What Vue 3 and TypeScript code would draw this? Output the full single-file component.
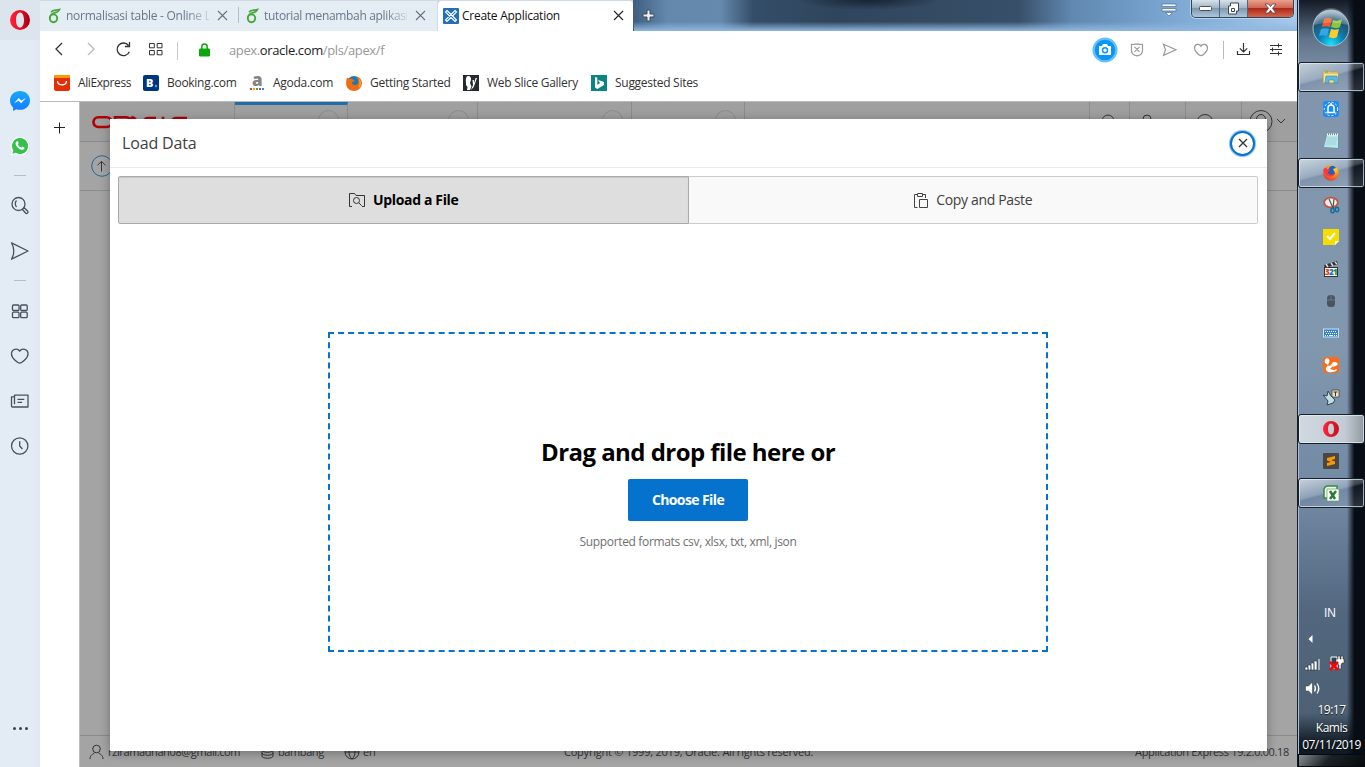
<script setup lang="ts">
interface Bookmark { id: string; label: string; width: number }

const bookmarks: Bookmark[] = [
  { id: 'ali', label: 'AliExpress', width: 89 },
  { id: 'booking', label: 'Booking.com', width: 106 },
  { id: 'agoda', label: 'Agoda.com', width: 97 },
  { id: 'firefox', label: 'Getting Started', width: 117 },
  { id: 'slice', label: 'Web Slice Gallery', width: 128 },
  { id: 'bing', label: 'Suggested Sites', width: 120 },
]

const sideIcons: string[] = ['messenger', 'whatsapp', 'line', 'search', 'send', 'line', 'grid', 'heart', 'news', 'clock']

const tasks: { id: string; state: string }[] = [
  { id: 'folder', state: 'open' },
  { id: 'share', state: '' },
  { id: 'notepad', state: '' },
  { id: 'fox', state: 'open' },
  { id: 'snip', state: '' },
  { id: 'sticky', state: '' },
  { id: 'clapper', state: '' },
  { id: 'mouse', state: '' },
  { id: 'keyboard', state: '' },
  { id: 'uc', state: '' },
  { id: 'bird', state: '' },
  { id: 'opera', state: 'focused' },
  { id: 'sublime', state: '' },
  { id: 'excel', state: 'open' },
]

const menuWidths: number[] = [113, 130, 154, 113]
</script>

<template>
  <div class="screen">
    <svg class="defs" width="0" height="0">
      <defs>
        <linearGradient id="operaRed" x1="0" x2="1"><stop offset="0" stop-color="#ff2438" /><stop offset=".55" stop-color="#e80d25" /><stop offset="1" stop-color="#98000e" /></linearGradient>
        <linearGradient id="operaTask" x1="0" x2="1"><stop offset="0" stop-color="#ff2438" /><stop offset="1" stop-color="#c80f20" /></linearGradient>
        <linearGradient id="msgBlue" x1="0" y1="0" x2="0" y2="1"><stop offset="0" stop-color="#16a9ff" /><stop offset="1" stop-color="#147cff" /></linearGradient>
        <radialGradient id="orb" cx=".5" cy=".95" r=".9"><stop offset="0" stop-color="#18e0ff" /><stop offset=".4" stop-color="#087fb4" /><stop offset=".75" stop-color="#23526f" /><stop offset="1" stop-color="#9ab5c6" /></radialGradient>
        <radialGradient id="foxFire" cx=".7" cy=".2" r=".9"><stop offset="0" stop-color="#ffe035" /><stop offset=".5" stop-color="#ff8a16" /><stop offset="1" stop-color="#e42a3d" /></radialGradient>
      </defs>
    </svg>

    <aside class="sidebar">
      <div class="opera-menu">
        <svg width="20" height="20" viewBox="0 0 20 20"><path fill="url(#operaRed)" fill-rule="evenodd" d="M10 0a10 10 0 1 0 0 20 10 10 0 0 0 0-20Zm0 2.400c2.600 0 4 3.500 4 7.600s-1.400 7.600-4 7.600S6 14.100 6 10s1.400-7.600 4-7.600Z" /></svg>
      </div>
      <div class="side-list">
        <div v-for="(icon, i) in sideIcons" :key="i" :class="icon === 'line' ? 'side-sep' : 'side-cell'">
          <svg v-if="icon === 'messenger'" width="22" height="22" viewBox="0 0 22 22"><path fill="url(#msgBlue)" d="M11 1C5.300 1 1 5.100 1 10.500c0 2.900 1.200 5.300 3.100 7V21l3.200-1.700c1.100.4 2.400.5 3.700.5 5.700 0 10-4 10-9.400S16.700 1 11 1Z" /><path fill="#fff" d="m5 13.200 4.800-5.100 2.500 2.500L17 8l-4.900 5.200-2.500-2.500Z" /></svg>
          <svg v-else-if="icon === 'whatsapp'" width="20" height="20" viewBox="0 0 20 20"><path fill="#fff" d="M10 .7A9.300 9.300 0 0 0 2 14.800L.6 19.500l4.900-1.300A9.300 9.300 0 1 0 10 .7Z" /><path fill="#35c24c" d="M10 2a8 8 0 0 0-6.700 12.400l-.9 3.300 3.400-.9A8 8 0 1 0 10 2Z" /><path fill="#fff" d="M6.900 5.300c.4-.3.900-.2 1.100.3l.6 1.500c.2.5-.7 1-.6 1.400.5 1.300 1.700 2.500 3.100 3 .4.200 1-1 1.500-.7l1.500.8c.5.300.4.900 0 1.400-.9 1-2.200 1-3.500.4-2.500-1-4.500-3.100-5-5.400-.2-1.100.3-2.100 1.300-2.700Z" /></svg>
          <svg v-else-if="icon !== 'line'" class="ink" width="20" height="20" viewBox="0 0 20 20">
            <template v-if="icon === 'search'"><circle cx="8.500" cy="8" r="6.500" /><path d="M6.500 4.500Q4 7.500 6.500 11" /><path d="m12.500 13.500 1.700-1.700 3.600 3.500c.8 1.200-.8 2.800-2 2Z" /></template>
            <path v-else-if="icon === 'send'" d="m1.500 1.800 16.500 8.200-16.500 8.200Q6 10 1.500 1.800Z" />
            <template v-else-if="icon === 'grid'"><rect x="2.500" y="4" width="6.500" height="5.500" rx="1" /><rect x="10.700" y="4" width="6.500" height="5.500" rx="1" /><rect x="2.500" y="11.200" width="6.500" height="5.500" rx="1" /><rect x="10.700" y="11.200" width="6.500" height="5.500" rx="1" /></template>
            <path v-else-if="icon === 'heart'" d="M9.700 5.200C7.600 1.700 1.500 2.900 1.500 8c0 4.600 6.700 9.200 8.200 9.200S18 12.600 18 8c0-5.100-6.200-6.300-8.300-2.800Z" />
            <template v-else-if="icon === 'news'"><path d="M4.500 13.200V4.100H18V16H2.500c-.7 0-1-.3-1-1V5.900h3M7.500 8.300h6.800M7.500 11.400h4.600" /></template>
            <template v-else><circle cx="9.700" cy="10" r="8.200" /><path d="M9.700 5.200V10l2.700 3" /></template>
          </svg>
        </div>
      </div>
      <div class="dots"><i></i><i></i><i></i></div>
    </aside>

    <main class="browser">
      <header class="tabstrip">
        <div v-for="n in 2" :key="n" class="tab" :class="'tab-' + n">
          <svg width="14" height="16" viewBox="0 0 14 16" fill="none" stroke="#45a73a"><ellipse cx="5.500" cy="10.300" rx="3.700" ry="3.900" stroke-width="1.900" /><path stroke-width="1.700" d="M2 9.500C2 6 4.500 5 8.500 4.500M3 4.200C5 1.700 7 2.600 11.500 1.500 10.500 4 8.500 4.700 5.500 5" /></svg>
          <span class="tab-title">{{ n === 1 ? 'normalisasi table - Online L' : 'tutorial menambah aplikasi' }}</span>
          <svg class="x" width="11" height="11" viewBox="0 0 11 11"><path d="m1 1 9 9M10 1l-9 9" /></svg>
        </div>
        <div class="tab current">
          <svg width="16" height="16" viewBox="0 0 16 16"><rect width="16" height="16" rx="1" fill="#2370b8" /><g fill="none" stroke="#fff" stroke-width="1.100"><path d="M4 2.500 13.500 12 12 13.500 2.500 4ZM12 2.500 13.500 4 4 13.500 2.500 12Z" /></g></svg>
          <span class="tab-title">Create Application</span>
          <svg class="x" width="11" height="11" viewBox="0 0 11 11"><path d="m1 1 9 9M10 1l-9 9" /></svg>
        </div>
        <div class="glass">
          <svg width="13" height="13" viewBox="0 0 13 13"><path d="M5 1h3v4h4v3H8v4H5V8H1V5h4Z" fill="#eee" stroke="#3b4d61" /></svg>
          <svg class="tabmenu" width="16" height="14" viewBox="0 0 16 14"><path fill="#f4f7fa" stroke="#52718f" stroke-width=".7" d="M1 1h14v2.500H1ZM1 5.500h14V8H1ZM4.500 9.500h7L8 13Z" /></svg>
          <div class="winbuttons">
            <span><svg width="13" height="6" viewBox="0 0 13 6"><rect x=".5" y=".5" width="12" height="4" rx="1" fill="#fff" stroke="#4b4f5a" /></svg></span>
            <span><svg width="13" height="13" viewBox="0 0 13 13"><path fill="#fff" stroke="#414959" d="M3.500 1h8v8h-2v3h-8V4h2ZM4.500 6.500h3v3h-3Z" /></svg></span>
            <span class="close"><svg width="13" height="11" viewBox="0 0 13 11"><path fill="#fff" stroke="#5a3c43" stroke-width=".8" d="M1 1h3.500l2 2.500 2-2.500H12L8.500 5.300 12 10H8.500l-2-2.700-2 2.700H1l3.500-4.700Z" /></svg></span>
          </div>
        </div>
      </header>

      <nav class="toolbar">
        <svg class="nav-left" width="120" height="22" viewBox="0 0 120 22" fill="none" stroke="#333" stroke-width="1.300">
          <path d="m11 5-6 6 6 6" /><path stroke="#bbb" d="m37 5 6 6-6 6" /><path d="M77.500 7.500a6.300 6.300 0 1 0 .8 6.200M78.500 4v4.500H74" />
          <path stroke-width="1" d="M98.500 5.500h4.800v4.300h-4.800ZM106.200 5.500h4.800v4.300h-4.800ZM98.500 12.500h4.800v4.300h-4.800ZM106.200 12.500h4.800v4.300h-4.800Z" />
        </svg>
        <i class="vline"></i>
        <svg class="lock" width="11" height="14" viewBox="0 0 11 14"><rect y="5.500" width="11" height="8" rx="1.300" fill="#0ca60c" /><path d="M2.800 6V3.800a2.700 2.700 0 0 1 5.400 0V6" fill="none" stroke="#0ca60c" stroke-width="1.500" /></svg>
        <span class="url">apex.<b>oracle.com</b>/pls/apex/f</span>
        <svg class="nav-right" width="200" height="26" viewBox="0 0 200 26" fill="none" stroke="#999" stroke-width="1.200">
          <circle cx="14" cy="13" r="11.400" fill="#0996f8" stroke="#67c0fc" stroke-width="2.300" /><path fill="#fff" stroke="none" d="M8 9h3l1-2h4l1 2h3v9H8Z" /><circle cx="14" cy="13.200" r="2.500" stroke="#0996f8" stroke-width="1.500" />
          <path d="M46 6.800c2.500.5 3.700 1 5.500.6v6c0 3.500-3 5-5.500 5.500-2.500-.5-5.500-2-5.500-5.500v-6c1.800.4 3-.1 5.500-.6ZM43.500 9.800l5 5M48.500 9.800l-5 5" />
          <path d="m72.500 7.300 12.500 5.500-12.500 5.500 2-5.500Z" />
          <path d="M110 9.200c-1.600-3.200-6.500-2.200-6.500 2 0 3.500 5 7.400 6.500 7.400s6.500-3.900 6.500-7.400c0-4.200-4.900-5.200-6.500-2Z" />
          <path stroke="#bbb" stroke-width="1" d="M132.500 4v18" />
          <path stroke="#333" d="M152.500 6v9m-3.700-3.700 3.700 3.700 3.700-3.700M146.500 14v3.500h12V14" />
          <path stroke="#333" stroke-width="1" d="M179 8.500h12M179 12.500h12M179 16.500h12M187.500 6.500v4M181.500 10.500v4M187.500 14.500v4" />
        </svg>
      </nav>

      <nav class="bookmarks">
        <div v-for="b in bookmarks" :key="b.id" class="bookmark" :style="{ width: b.width + 'px' }">
          <svg width="16" height="16" viewBox="0 0 16 16">
            <template v-if="b.id === 'ali'"><rect width="16" height="16" rx="2" fill="#e62e04" /><path d="M0 3V2q0-2 2-2h12q2 0 2 2v1Z" fill="#ff9900" /><path d="M3.500 6c.3 5.200 8.700 5.200 9 0" fill="none" stroke="#fff" stroke-width="1.400" /></template>
            <template v-else-if="b.id === 'booking'"><rect width="16" height="16" rx="2" fill="#003580" /><text x="3" y="12" class="glyph" font-size="11" fill="#fff">B</text><circle cx="13" cy="11" r="1.200" fill="#25adf5" /></template>
            <template v-else-if="b.id === 'agoda'"><text x="3" y="11" class="glyph" font-size="17" fill="#858585">a</text><path d="M1 13h2v2H1Z" fill="#e43b3b" /><path d="M4 13h2v2H4Z" fill="#f5a500" /><path d="M7 13h2v2H7Z" fill="#43a843" /><path d="M10 13h2v2h-2Z" fill="#954bb2" /><path d="M13 13h2v2h-2Z" fill="#338cdc" /></template>
            <template v-else-if="b.id === 'firefox'"><circle cx="8" cy="8" r="7" fill="#1a79bb" /><path fill="#ed6d12" d="M1 2.500 3.500 4C5 3 6 3.300 7 4.500L9 6 6 7.200c0 2 2 3.600 4.500 2.500C14 8 12 4 10 1.500 14 2 16 5 16 8.500 15.500 13 12 16 8 16-.5 15.800-.8 8 1 2.500Z" /><path fill="#ffc32b" d="M13 3.500c2.700 3 2.300 7.500-.5 9.700 1.500-3 1.500-6 .5-9.700Z" /></template>
            <template v-else-if="b.id === 'slice'"><rect width="16" height="16" fill="#252a2d" /><path fill="#fff" d="M4.500 1C7 .5 8.500 2.500 8 5L7 8l1.500 3.500L7 15H4l.5-3L3 10C3.500 8 1.500 3 4.500 1Zm5 4H11l.3 3L12.500 3H14l-3.200 9L8 15l2-5Z" /></template>
            <template v-else><rect width="16" height="16" fill="#0c8484" /><path fill="#fff" d="m4 2 2.300.8v7L9.500 8 8 7.200 7.300 5 13 7.100V10l-6.700 4L4 12.500Z" /></template>
          </svg>
          <span>{{ b.label }}</span>
        </div>
      </nav>

      <section class="viewport">
        <div class="gutter"><svg width="12" height="12" viewBox="0 0 12 12"><path d="M6.500 .5v11M1 5.500h11" stroke="#222" /></svg></div>
        <div class="page">
          <div class="apex-header">
            <div class="oracle"><svg width="100" height="16" viewBox="0 0 100 16" fill="none" stroke="#b20007" stroke-width="2.600"><rect x="1.500" y="1.300" width="18" height="9.700" rx="4.800" /><path d="M23 12V1.300h11q3 0 3.500 2M64 2h-8q-3 0-4 3M71 .7v12M95 2H84q-3 0-4 3" /><path d="m36 6 4-4.500h1.500L46 6" /></svg></div>
            <div v-for="(w, i) in menuWidths" :key="i" class="apex-tab" :class="{ on: i === 0 }" :style="{ width: w + 'px' }"><i></i></div>
            <div class="header-tools">
              <span class="tool-a"><svg width="18" height="18" viewBox="0 0 18 18"><circle cx="8" cy="9" r="6" /></svg></span>
              <span class="tool-b"><svg width="18" height="18" viewBox="0 0 18 18"><circle cx="9" cy="7" r="4" /></svg></span>
              <span class="tool-b"><svg width="18" height="18" viewBox="0 0 18 18"><circle cx="9" cy="10.500" r="8" /></svg></span>
              <span class="tool-c"><svg width="40" height="26" viewBox="0 0 40 26"><circle cx="13" cy="13.500" r="11" /><circle cx="13" cy="11" r="4.500" /><path d="M29 11l4 4 4-4" /></svg></span>
            </div>
          </div>
          <div class="crumb"><svg width="22" height="22" viewBox="0 0 22 22" fill="none"><circle cx="11" cy="11" r="10.300" stroke="#286596" /><path d="M10.500 16.500v-10M6.500 10.300l4-4 4 4" stroke="#333" /></svg></div>
          <div class="page-body"></div>
          <footer class="apex-footer">
            <svg width="15" height="16" viewBox="0 0 15 16"><circle cx="7.500" cy="5" r="3.800" /><path d="M1 15c0-4 3-5 4.500-6M14 15c0-4-3-5-4.500-6" /></svg>
            <span class="mail">rziramadhan08@gmail.com</span>
            <svg width="13" height="15" viewBox="0 0 13 15"><ellipse cx="6.500" cy="3" rx="5.500" ry="2.200" /><path d="M1 3v9c0 3 11 3 11 0V3M1 6c0 3 11 3 11 0M1 9c0 3 11 3 11 0" /></svg>
            <span class="space">bambang</span>
            <svg width="16" height="16" viewBox="0 0 16 16"><circle cx="8" cy="8" r="7" /><path d="M1 8h14M8 1c-4 3-4 11 0 14M8 1c4 3 4 11 0 14" /></svg>
            <span class="lang">en</span>
            <span class="copy">Copyright © 1999, 2019, Oracle. All rights reserved.</span>
            <span class="version">Application Express 19.2.0.00.18</span>
          </footer>
        </div>

        <div class="dialog">
          <div class="dialog-title"><h1>Load Data</h1><button class="dismiss" aria-label="Close"><svg width="10" height="10" viewBox="0 0 10 10"><path d="m1 1 8 8M9 1 1 9" stroke="#333" stroke-width="1.300" /></svg></button></div>
          <div class="switch">
            <div class="option selected"><svg width="18" height="16" viewBox="0 0 18 16" fill="none" stroke="#333"><path d="M4 14.500H1.500V1.500h5l1.500 2h8.500v11H14" /><circle cx="8.500" cy="8.500" r="3" /><path d="m10.700 10.700 3 3" /></svg><span>Upload a File</span></div>
            <div class="option"><svg width="16" height="17" viewBox="0 0 16 17" fill="none" stroke="#444"><path d="M4 2.500H1.500v13h3M10 2.500h2.500V6M4.500 1.500h5v3h-5ZM6.500 7.500h8v8h-8Z" /></svg><span>Copy and Paste</span></div>
          </div>
          <div class="dropzone">
            <h2>Drag and drop file here or</h2>
            <button class="choose">Choose File</button>
            <p>Supported formats csv, xlsx, txt, xml, json</p>
          </div>
        </div>
      </section>
    </main>

    <aside class="taskbar">
      <div class="start"><svg width="40" height="40" viewBox="0 0 40 40"><circle cx="20" cy="20" r="18" fill="url(#orb)" stroke="#a8bdca" /><path fill="#f15b29" d="M13 11c3-2 6-1 8 0l-2 8c-3-1-5-1-8 0Z" /><path fill="#8bc63f" d="M22 12c3 1 6 1 9-1l-2 8c-3 2-6 1-9 0Z" /><path fill="#35a6df" d="M10 21c3-1 6-1 8 0l-2 7c-3-1-5-1-8 0Z" /><path fill="#ffcb2b" d="M20 21c3 1 5 1 8 0l-2 8c-3 2-6 1-8 0Z" /><path fill="#fff" opacity=".2" d="M3 17a17 17 0 0 1 34 0Q20 12 3 17Z" /></svg></div>
      <div v-for="t in tasks" :key="t.id" class="task" :class="t.state">
        <svg width="18" height="18" viewBox="0 0 18 18">
          <template v-if="t.id === 'folder'"><path fill="#e8c869" stroke="#b6964d" stroke-width=".6" d="M1 3h6l1 1h8v11H1Z" /><path fill="#f6e394" d="M2 6h14v8H2Z" /><path fill="#5bb9df" stroke="#3786af" stroke-width=".6" d="M4 8h11l1 7h-4v-3H7v3H3Z" /><path stroke="#31b64b" d="M3 4h3" /></template>
          <template v-else-if="t.id === 'share'"><rect x="1" y="1" width="16" height="16" rx="3" fill="#188dfa" /><circle cx="9" cy="9" r="6.700" fill="none" stroke="#fff" stroke-dasharray="2 2" /><path fill="none" stroke="#fff" stroke-width="1.500" d="M4.500 12.500h9M6 12V8a3 3 0 0 1 6 0v4M9 3v2" /></template>
          <template v-else-if="t.id === 'notepad'"><path fill="#6797a7" d="m4 3 13-1v15l-15-1Z" /><path fill="#b9e6eb" d="M5 3h11v13L2 15Z" /><path stroke="#fff" stroke-dasharray="1 1" stroke-width="2" d="M5 2.500h12" /><path stroke="#80b4c0" stroke-width=".5" d="M5 6h10M5 8h10M4 10h10M4 12h10" /></template>
          <template v-else-if="t.id === 'fox'"><circle cx="9" cy="9" r="7.800" fill="url(#foxFire)" /><path fill="#1f62b8" d="M7 4c2-3 5-3 7 0l-3 1 2 4c-1 4-6 4-8 0Z" /><path fill="#ff3542" d="M1 6c2-3 3-2 4-1l3 1-2 2c0 3 4 4 7 1-1 5-8 5-10 0Z" /></template>
          <template v-else-if="t.id === 'snip'"><ellipse cx="9" cy="6.500" rx="6.800" ry="4.800" fill="#eee" stroke="#c45442" stroke-width="1.800" /><path stroke="#555" stroke-width="1.200" d="m7 3 4 9M12 3l-1 9" /><ellipse cx="10.500" cy="14.500" rx="1.700" ry="2.300" fill="none" stroke="#126da0" stroke-width="1.400" /><ellipse cx="15" cy="13.500" rx="1.700" ry="2.300" fill="none" stroke="#126da0" stroke-width="1.400" /></template>
          <template v-else-if="t.id === 'sticky'"><path fill="#f5dd00" d="M1 1h16v12l-4 4H1Z" /><path fill="#fff" d="M13 17v-4h4Z" /><path fill="none" stroke="#fff" stroke-width="2" d="m5 8 3 3 5-6" /></template>
          <template v-else-if="t.id === 'clapper'"><path fill="#333" d="M2 5 15 1l1 3-13 4ZM2 7h14v10H2Z" /><path stroke="#ddd" stroke-width="1.500" d="m4 4 2 3M9 3l2 3M13 2l2 2" /><path fill="#f5f5f5" d="M3 8h12v8H3Z" /><text x="3" y="15" class="glyph" font-size="8" fill="#d9421e">3</text><text x="7" y="15" class="glyph" font-size="8" fill="#1c75bd">2</text><text x="11" y="15" class="glyph" font-size="8" fill="#2c8b34">1</text></template>
          <template v-else-if="t.id === 'mouse'"><rect x="5" y="3" width="8" height="12" rx="3.500" fill="#4a535e" /><path stroke="#75818e" stroke-width=".8" d="M9 3v5M5 8h8" /></template>
          <template v-else-if="t.id === 'keyboard'"><rect x="1.500" y="5" width="15" height="8" fill="#3687c9" stroke="#c3e2f7" /><path stroke="#fff" stroke-dasharray="1 1" d="M3 7.500h12M4 9.500h11M3 11.500h3M12 11.500h3" /><path stroke="#fff" d="M7 11.500h4" /></template>
          <template v-else-if="t.id === 'uc'"><rect x="1" y="1" width="16" height="16" rx="3" fill="#ff6a16" /><path fill="#fff" d="M7 3C4 1 2 4 3 7l3 2-2 3c-1 3 3 5 6 4 3 0 5-1 5-3l-3 1-4-1 2-2 4-1 2-2-2-2h-3l-2 3-2 1C4 9 9 7 7 3Z" /></template>
          <template v-else-if="t.id === 'bird'"><path fill="#c0dfe2" stroke="#34474d" d="m1 7 4 1 1-5 3 5 4 4-2 3-6 2 1-4Z" /><path fill="#eee5c5" stroke="#333" stroke-width=".7" d="M10 2h7v7h-7Z" /><path stroke="#333" d="M11.500 4h4M13.500 4v4" /></template>
          <path v-else-if="t.id === 'opera'" fill="url(#operaTask)" fill-rule="evenodd" d="M9 1a8 8 0 1 0 0 16A8 8 0 0 0 9 1Zm0 2.500c2 0 3 2.400 3 5.500s-1 5.500-3 5.500-3-2.400-3-5.500 1-5.500 3-5.500Z" />
          <template v-else-if="t.id === 'sublime'"><rect x="1" y="1" width="16" height="16" rx="1" fill="#474747" /><path fill="#ff9800" d="m5 6 8-2v3L9 8l4 1.500V12l-8 2v-3l4-1-4-1.500Z" /></template>
          <template v-else><path fill="#e9f5e5" stroke="#358c3c" stroke-width="1.500" d="M2 5q1-3 4-3h9v12H2Z" /><path fill="#fff" stroke="#6b9a6c" stroke-width=".7" d="M5 5h12v12H5Z" /><path stroke="#287c32" stroke-width="2.500" d="m8 7 5 8M14 7l-6 8" /></template>
        </svg>
      </div>
      <div class="tray">
        <span class="locale">IN</span>
        <svg class="tray-icons" width="50" height="64" viewBox="0 0 50 64">
          <path fill="#fff" d="M10.500 4v8L6.500 8Z" />
          <path fill="#fff" stroke="#273443" stroke-width=".6" d="M3 36h3v3H3ZM6 34h3v5H6ZM9 32h3v7H9ZM12 30h3v9h-3Z" /><path fill="#a8b0b7" d="M16 28h2v11h-2Z" />
          <path fill="#344555" stroke="#fff" d="M29 26h6v11h-6Z" /><path fill="#fff" stroke="#222" stroke-width=".5" d="M34 28h2v-3h2v3h1v-3h2v3h1v4h-2l-1 2v4h-2v-4l-3-2Z" /><path stroke="#f00" stroke-width="2.500" d="m28 31 8 8M36 31l-8 8" />
          <path fill="#fff" stroke="#273443" stroke-width=".5" d="M3.500 55h3l4-4v13l-4-4h-3Z" /><path fill="none" stroke="#fff" stroke-width="1.300" d="M12.500 54.500q2 3 0 6M15 52.500q3.500 5 0 10" />
        </svg>
        <div class="clock"><span>19:17</span><span>Kamis</span><span>07/11/2019</span></div>
      </div>
      <div class="desktop"></div>
    </aside>
  </div>
</template>

<style>
html, body { overflow: hidden; }
body { margin: 0; }
</style>

<style scoped>
* { box-sizing: border-box; }
.screen { display: flex; width: 1365px; height: 767px; font-family: "Open Sans", "Noto Sans", sans-serif; font-size: 12px; letter-spacing: -.3px; color: #333; overflow: hidden; position: relative; }
svg { display: block; flex: none; overflow: visible; }
.defs { position: absolute; }
.glyph { font-family: "Open Sans", sans-serif; font-weight: 800; letter-spacing: 0; }
button { border: 0; padding: 0; font: inherit; letter-spacing: inherit; }
h1, h2, p { margin: 0; }
.sidebar { width: 40px; flex: none; background: linear-gradient(90deg, #e3ecf5 80%, #dfe7f1); display: flex; flex-direction: column; }
.opera-menu { height: 40px; display: grid; place-items: center; background: #dce4ee; }
.side-list { padding-top: 38px; }
.side-cell { height: 45px; display: grid; place-items: center; }
.side-sep { height: 15px; display: grid; place-items: center; }
.side-sep::after { content: ""; width: 12px; height: 1px; background: #b2becb; }
.ink { fill: none; stroke: #46515d; stroke-width: 1.300; stroke-linejoin: round; }
.dots { display: flex; gap: 3px; margin: auto auto 37px; }
.dots i { width: 3px; height: 3px; border-radius: 50%; background: #39424c; }
.browser { width: 1257px; flex: none; display: flex; flex-direction: column; background: #fff; }
.tabstrip { height: 31px; display: flex; background: #cfdae5; padding-top: 1px; }
.tab { height: 30px; display: flex; align-items: center; gap: 4px; background: #e4ecf4; color: #687888; padding-left: 8px; position: relative; white-space: nowrap; padding-bottom: 1px; flex: none; }
.tab-1 { width: 199px; }
.tab-2 { width: 198px; padding-left: 7px; }
.tab-1::after { content: ""; position: absolute; right: 0; top: 6px; width: 1px; height: 16px; background: #b2bdc8; }
.tab-title { width: 143px; }
.tab-1 .tab-title { letter-spacing: -.26px; }
.tab-2 .tab-title { letter-spacing: -.34px; }
.tab-1 .tab-title, .tab-2 .tab-title { mask-image: linear-gradient(90deg, #000 84%, rgba(0, 0, 0, .2)); }
.tab .x { margin-left: 4px; stroke: #657380; stroke-width: 1.100; }
.current { width: 195px; margin-left: 1px; background: #fff; color: #111; padding-left: 5px; gap: 3px; border-radius: 4px 4px 0 0; letter-spacing: -.26px; }
.current .x { margin-left: 5px; stroke: #222; }
.glass { flex: 1; margin-top: -1px; height: 31px; display: flex; align-items: center; padding-left: 8px; background: radial-gradient(ellipse at 75px 16px, #6f98bf 0, rgba(111, 152, 191, 0) 50px 16px), linear-gradient(180deg, rgba(145, 184, 223, 0) 70%, #91b8df), radial-gradient(60px 9px at 235px 0, #172331, rgba(23, 35, 49, 0)), radial-gradient(50px 9px at 290px 0, #172331, rgba(23, 35, 49, 0)), linear-gradient(90deg, #3f5f82 0, #4a6987 14%, #2f455d 20%, #384f69 58%, #6088b0 66%, #79a5d1 80%, #a5c9eb); background: linear-gradient(180deg, rgba(145, 184, 223, 0) 70%, #91b8df), radial-gradient(70px 10px at 235px 0, #172331, rgba(23, 35, 49, 0)), linear-gradient(90deg, #3f5f82 0, #6388ac 5%, #668aae 13%, #344d68 18%, #2f455d 30%, #384f69 58%, #6088b0 66%, #79a5d1 80%, #a5c9eb); border-left: 1px solid #465e78; }
.tabmenu { margin-left: auto; margin-top: -12px; margin-right: 14px; }
.winbuttons { align-self: flex-start; display: flex; height: 18px; width: 103px; margin-right: 3px; border: 1px solid #32465a; border-top: 0; border-radius: 0 0 5px 5px; overflow: hidden; box-shadow: 0 0 0 1px #bad3e8; }
.winbuttons span { width: 28px; display: grid; place-items: center; border-right: 1px solid #51677c; background: linear-gradient(#d8e2e9, #a1b5c8 45%, #8298af 50%, #acc7dd); }
.winbuttons .close { flex: 1; border: 0; background: linear-gradient(#eaa18c, #d16655 45%, #ac2a1b 50%, #d5644c); }
.toolbar { height: 39px; display: flex; align-items: center; padding-left: 11px; }
.nav-left { margin-top: -4px; }
.vline { width: 1px; height: 18px; background: #c8c8c8; margin-left: 6px; }
.lock { margin: -2px 0 0 21px; }
.url { margin: -1px 0 0 19px; color: #999; font-size: 13px; letter-spacing: -.37px; }
.url b { font-weight: 400; color: #222; }
.nav-right { margin-left: auto; margin-right: 6px; margin-top: -1px; }
.bookmarks { height: 31px; padding: 0 0 5px 14px; display: flex; align-items: center; }
.bookmark { display: flex; gap: 8px; align-items: center; white-space: nowrap; flex: none; height: 26px; letter-spacing: -.28px; }
.bookmark:first-child { letter-spacing: -.4px; }
.bookmark span { margin-top: -1px; }
.viewport { position: relative; height: 666px; display: flex; border-top: 1px solid #b3bbc3; overflow: hidden; }
.gutter { width: 40px; border-right: 1px solid #bcbcbc; padding: 20px 0 0 13px; }
.page { flex: 1; background: #a4a4a4; display: flex; flex-direction: column; }
.apex-header { height: 40px; display: flex; border-bottom: 1px solid #8b8b8b; background: #9f9f9f; }
.oracle { width: 155px; padding: 14px 0 0 12px; border-right: 1px solid #8d8d8d; }
.apex-tab { border-right: 1px solid #8b8b8b; height: 39px; padding: 8px 8px; }
.apex-tab i { display: block; width: 21px; height: 21px; border: 1px solid #8b8b8b; border-radius: 50%; margin-left: auto; }
.apex-tab.on { border-top: 3px solid #236ca5; padding-top: 5px; }
.header-tools { margin-left: auto; display: flex; }
.header-tools span { border-left: 1px solid #8b8b8b; display: flex; justify-content: center; padding-top: 10px; }
.header-tools svg, .apex-footer svg { fill: none; stroke: #333; stroke-width: 1; }
.header-tools .tool-a { width: 40px; padding-right: 2px; }
.header-tools .tool-b { width: 56px; }
.header-tools .tool-b:nth-child(2) { padding-right: 22px; }
.header-tools .tool-b:nth-child(3) { padding-right: 18px; }
.header-tools .tool-c { width: 56px; padding-top: 6px; padding-right: 3px; }
.crumb { height: 49px; border-bottom: 1px solid #8b8b8b; padding: 13px 11px; }
.page-body { flex: 1; }
.apex-footer { height: 32px; border-top: 1px solid #8b8b8b; display: flex; align-items: center; padding: 0 8px 0 9px; font-size: 11px; letter-spacing: -.22px; white-space: nowrap; }
.mail { width: 157px; padding-left: 4px; letter-spacing: -.38px; }
.space { width: 70px; padding-left: 4px; letter-spacing: -.4px; }
.lang { width: 204px; padding-left: 3px; }
.version { margin-left: auto; letter-spacing: -.34px; }
.dialog { position: absolute; left: 70px; top: 17px; width: 1157px; height: 632px; background: #fff; box-shadow: 0 2px 10px rgba(0, 0, 0, .32); display: flex; flex-direction: column; }
.dialog-title { height: 49px; flex: none; border-bottom: 1px solid #ececec; display: flex; align-items: center; justify-content: space-between; padding: 0 12px 0 12px; }
.dialog-title h1 { font-weight: 400; font-size: 16px; letter-spacing: -.15px; color: #404040; }
.dismiss { width: 25px; height: 25px; border: 2px solid #0572ce; border-radius: 50%; background: #fff; display: grid; place-items: center; box-shadow: 0 0 1px 1px #7fb8e8; }
.switch { margin: 8px 9px 0 8px; height: 48px; display: flex; }
.option { flex: 1; display: flex; align-items: center; justify-content: center; gap: 7px; background: #f9f9f9; border: 1px solid #ccc; border-left: 0; border-radius: 0 2px 2px 0; font-size: 14px; letter-spacing: -.35px; color: #404040; }
.option span { margin-top: -2px; }
.option.selected { background: #dedede; border: 1px solid #aaa; border-radius: 2px 0 0 2px; color: #000; font-weight: 700; box-shadow: inset 0 1px 1px #c7c7c7; }
.dropzone { width: 720px; height: 320px; margin: 108px 0 0 218px; border: 2px dashed #0572ce; display: flex; flex-direction: column; align-items: center; padding-top: 101px; }
.dropzone h2 { font-size: 24px; line-height: 34px; letter-spacing: -.55px; color: #000; }
.choose { width: 120px; height: 42px; border-radius: 2px; background: #0572ce; color: #fff; font-size: 14px; font-weight: 700; letter-spacing: -.6px; margin-top: 10px; padding-bottom: 1px; }
.dropzone p { font-size: 12px; line-height: 16px; margin-top: 13px; color: #707070; letter-spacing: -.34px; }
.taskbar { width: 68px; flex: none; display: flex; flex-direction: column; border-left: 1px solid #161e29; box-shadow: inset 1px 0 #a9bdcf; background: linear-gradient(90deg, rgba(8, 13, 21, 0) 73%, #080d15 84%), linear-gradient(180deg, #131a25 0, #5f7489 5%, #8196ad 10%, #8197ae 45%, #7289a4 65%, #52677e 80%, #4d6074 93%, #111923 97%); }
.start { height: 61px; padding: 8px 0 0 13px; }
.task { height: 32px; padding-right: 1px; display: grid; place-items: center; flex: none; }
.task.open, .task.focused { border: 1px solid #17202a; box-shadow: inset 0 0 0 1px rgba(235, 244, 250, .65); border-radius: 3px; background: linear-gradient(165deg, rgba(255, 255, 255, .6), rgba(220, 233, 244, .25) 45%, rgba(110, 130, 150, .1) 50%, rgba(220, 230, 240, .18)); height: 30px; margin: 1px 0; width: 67px; }
.task.focused { background: linear-gradient(90deg, #d0d8e0, #c3ccd5 70%, #9299a1); }
.tray { height: 245px; color: #fff; padding-top: 94px; display: flex; flex-direction: column; }
.locale { line-height: 18px; padding: 1px 0 0 26px; }
.tray-icons { margin-top: 9px; padding-left: 4px; width: 54px; }
.clock { display: flex; flex-direction: column; align-items: center; line-height: 17.500px; margin-top: 6px; font-size: 12px; letter-spacing: -.5px; text-shadow: 0 1px 1px #111; }
.desktop { height: 13px; border: 1px solid #060a0e; background: linear-gradient(130deg, #858e94, #1b2227 45%, #080b0d); }
</style>
